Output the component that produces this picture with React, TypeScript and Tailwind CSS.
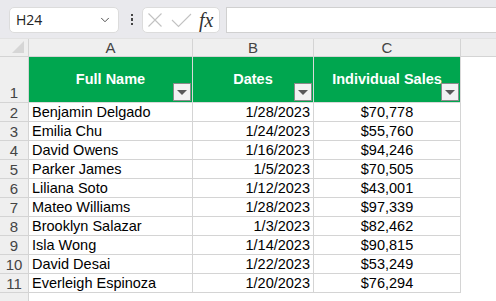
import { ChevronDown } from "lucide-react";

const rows: [string, string, string][] = [
  ["Benjamin Delgado", "1/28/2023", "$70,778"],
  ["Emilia Chu", "1/24/2023", "$55,760"],
  ["David Owens", "1/16/2023", "$94,246"],
  ["Parker James", "1/5/2023", "$70,505"],
  ["Liliana Soto", "1/12/2023", "$43,001"],
  ["Mateo Williams", "1/28/2023", "$97,339"],
  ["Brooklyn Salazar", "1/3/2023", "$82,462"],
  ["Isla Wong", "1/14/2023", "$90,815"],
  ["David Desai", "1/22/2023", "$53,249"],
  ["Everleigh Espinoza", "1/20/2023", "$76,294"],
];

const cols = "grid grid-cols-[29px_164px_121px_147px_1fr]";

function FilterBtn() {
  return (
    <div className="absolute bottom-[1px] right-[1px] flex h-[18px] w-[18px] items-center justify-center border border-[#8a8a8a] bg-[#f2f2f2]">
      <div className="h-0 w-0 border-x-[5px] border-t-[5px] border-x-transparent border-t-[#595959]" />
    </div>
  );
}

function HeadCell({ label }: { label: string }) {
  return (
    <div className="relative flex h-[46px] items-center justify-center border-r border-b border-[#d9d9d9] bg-[#00a64f] text-[14.5px] font-bold leading-none text-white">
      {label}
      <FilterBtn />
    </div>
  );
}

export default function App() {
  return (
    <div className="h-[301px] w-[496px] overflow-hidden bg-white font-['Liberation_Sans',Arial,sans-serif] text-black">
      {/* formula bar */}
      <div className="flex h-[38px] items-center bg-[#e9e9ed] pt-[1px]">
        <div className="ml-[9px] flex h-[26px] w-[110px] items-center justify-between rounded-[5px] border border-[#dcdcdc] bg-white pl-[6px] pr-[6px]">
          <span className="font-['Open_Sans',sans-serif] text-[14px] text-[#222]">H24</span>
          <ChevronDown size={14} strokeWidth={1.6} className="text-[#444]" />
        </div>
        <div className="ml-[10px] flex w-[6px] flex-col items-center gap-[2px]">
          <span className="h-[2.5px] w-[2.5px] bg-[#444]" />
          <span className="h-[2.5px] w-[2.5px] bg-[#444]" />
          <span className="h-[2.5px] w-[2.5px] bg-[#444]" />
        </div>
        <div className="ml-[7px] flex h-[26px] w-[78px] items-center rounded-[5px] border border-[#dcdcdc] bg-white pl-[4px]">
          <svg width="16" height="16" viewBox="0 0 16 16" fill="none" stroke="#c2c2c2" strokeWidth="1.1">
            <path d="M1.5 1.5 L14.5 14.5 M14.5 1.5 L1.5 14.5" />
          </svg>
          <svg width="21" height="16" viewBox="0 0 21 16" fill="none" stroke="#c2c2c2" strokeWidth="1.1" className="ml-[8px]">
            <path d="M1 8 L7.5 14.5 L20 2" />
          </svg>
          <span className="ml-[7px] font-['Liberation_Serif',serif] text-[20px] italic leading-none text-[#333]">fx</span>
        </div>
        <div className="ml-[6px] h-[26px] flex-1 border-y border-l border-[#d0d0d0] bg-white" />
      </div>

      {/* column headers */}
      <div className={`${cols} h-[19px] border-t border-[#e2e2e2] bg-[#efefef] text-[15px] leading-none text-[#444]`}>
        <div className="relative border-r border-b border-[#d4d4d4]">
          <div className="absolute right-[4px] bottom-[3px] h-0 w-0 border-l-[12px] border-b-[12px] border-l-transparent border-b-[#d6d6d6]" />
        </div>
        <div className="flex items-center justify-center border-r border-b border-[#d4d4d4]">A</div>
        <div className="flex items-center justify-center border-r border-b border-[#d4d4d4]">B</div>
        <div className="flex items-center justify-center border-r border-b border-[#d4d4d4]">C</div>
        <div className="border-b border-[#d4d4d4]" />
      </div>

      {/* header row */}
      <div className={cols}>
        <div className="flex h-[46px] items-end justify-center border-r border-b border-[#d4d4d4] bg-[#efefef] pb-[2px] text-[15px] leading-none text-[#444]">
          1
        </div>
        <HeadCell label="Full Name" />
        <HeadCell label="Dates" />
        <HeadCell label="Individual Sales" />
        <div />
      </div>

      {rows.map(([name, date, sales], i) => (
        <div key={name} className={`${cols} h-[19px] text-[14.5px] leading-none`}>
          <div className="flex items-center justify-center border-r border-b border-[#d4d4d4] bg-[#efefef] text-[15px] text-[#444]">
            {i + 2}
          </div>
          <div className="flex items-center border-r border-b border-[#d4d4d4] pl-[3px]">{name}</div>
          <div className="flex items-center justify-end border-r border-b border-[#d4d4d4] pr-[3px]">{date}</div>
          <div className="flex items-center justify-center border-r border-b border-[#d4d4d4]">{sales}</div>
          <div />
        </div>
      ))}
      <div className={cols}>
        <div className="h-[8px] border-r border-[#d4d4d4] bg-[#efefef]" />
      </div>
    </div>
  );
}
